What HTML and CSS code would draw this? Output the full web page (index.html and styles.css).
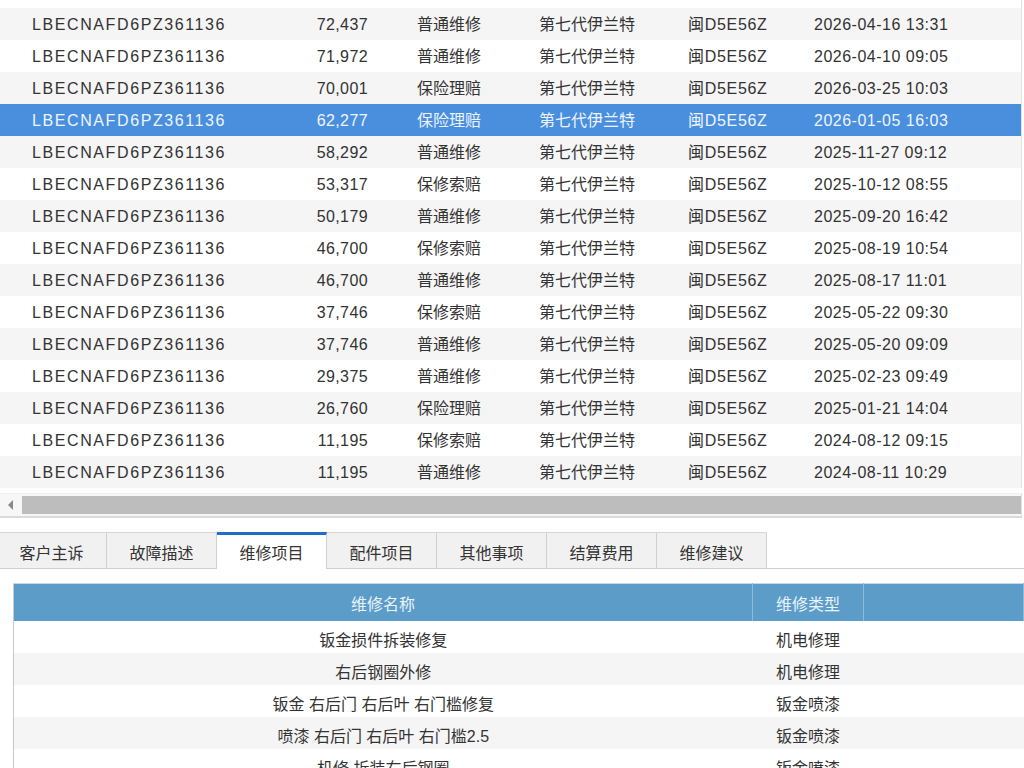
FILE: index.html
```html
<!DOCTYPE html>
<html lang="zh-CN">
<head>
    <meta charset="UTF-8">
    <meta name="viewport" content="width=device-width, initial-scale=1.0">
    <title>维修记录</title>
    <link rel="stylesheet" href="styles.css">
</head>
<body>

    <div id="history-grid">
        <div class="rows">
            <div class="row"><span class="vin">LBECNAFD6PZ361136</span><span class="km">73,915</span><span class="kind">保修索赔</span><span class="model">第七代伊兰特</span><span class="plate">闽D5E56Z</span><span class="date">2026-04-22 10:18</span></div>
            <div class="row alt"><span class="vin">LBECNAFD6PZ361136</span><span class="km">72,437</span><span class="kind">普通维修</span><span class="model">第七代伊兰特</span><span class="plate">闽D5E56Z</span><span class="date">2026-04-16 13:31</span></div>
            <div class="row"><span class="vin">LBECNAFD6PZ361136</span><span class="km">71,972</span><span class="kind">普通维修</span><span class="model">第七代伊兰特</span><span class="plate">闽D5E56Z</span><span class="date">2026-04-10 09:05</span></div>
            <div class="row alt"><span class="vin">LBECNAFD6PZ361136</span><span class="km">70,001</span><span class="kind">保险理赔</span><span class="model">第七代伊兰特</span><span class="plate">闽D5E56Z</span><span class="date">2026-03-25 10:03</span></div>
            <div class="row selected"><span class="vin">LBECNAFD6PZ361136</span><span class="km">62,277</span><span class="kind">保险理赔</span><span class="model">第七代伊兰特</span><span class="plate">闽D5E56Z</span><span class="date">2026-01-05 16:03</span></div>
            <div class="row alt"><span class="vin">LBECNAFD6PZ361136</span><span class="km">58,292</span><span class="kind">普通维修</span><span class="model">第七代伊兰特</span><span class="plate">闽D5E56Z</span><span class="date">2025-11-27 09:12</span></div>
            <div class="row"><span class="vin">LBECNAFD6PZ361136</span><span class="km">53,317</span><span class="kind">保修索赔</span><span class="model">第七代伊兰特</span><span class="plate">闽D5E56Z</span><span class="date">2025-10-12 08:55</span></div>
            <div class="row alt"><span class="vin">LBECNAFD6PZ361136</span><span class="km">50,179</span><span class="kind">普通维修</span><span class="model">第七代伊兰特</span><span class="plate">闽D5E56Z</span><span class="date">2025-09-20 16:42</span></div>
            <div class="row"><span class="vin">LBECNAFD6PZ361136</span><span class="km">46,700</span><span class="kind">保修索赔</span><span class="model">第七代伊兰特</span><span class="plate">闽D5E56Z</span><span class="date">2025-08-19 10:54</span></div>
            <div class="row alt"><span class="vin">LBECNAFD6PZ361136</span><span class="km">46,700</span><span class="kind">普通维修</span><span class="model">第七代伊兰特</span><span class="plate">闽D5E56Z</span><span class="date">2025-08-17 11:01</span></div>
            <div class="row"><span class="vin">LBECNAFD6PZ361136</span><span class="km">37,746</span><span class="kind">保修索赔</span><span class="model">第七代伊兰特</span><span class="plate">闽D5E56Z</span><span class="date">2025-05-22 09:30</span></div>
            <div class="row alt"><span class="vin">LBECNAFD6PZ361136</span><span class="km">37,746</span><span class="kind">普通维修</span><span class="model">第七代伊兰特</span><span class="plate">闽D5E56Z</span><span class="date">2025-05-20 09:09</span></div>
            <div class="row"><span class="vin">LBECNAFD6PZ361136</span><span class="km">29,375</span><span class="kind">普通维修</span><span class="model">第七代伊兰特</span><span class="plate">闽D5E56Z</span><span class="date">2025-02-23 09:49</span></div>
            <div class="row alt"><span class="vin">LBECNAFD6PZ361136</span><span class="km">26,760</span><span class="kind">保险理赔</span><span class="model">第七代伊兰特</span><span class="plate">闽D5E56Z</span><span class="date">2025-01-21 14:04</span></div>
            <div class="row"><span class="vin">LBECNAFD6PZ361136</span><span class="km">11,195</span><span class="kind">保修索赔</span><span class="model">第七代伊兰特</span><span class="plate">闽D5E56Z</span><span class="date">2024-08-12 09:15</span></div>
            <div class="row alt"><span class="vin">LBECNAFD6PZ361136</span><span class="km">11,195</span><span class="kind">普通维修</span><span class="model">第七代伊兰特</span><span class="plate">闽D5E56Z</span><span class="date">2024-08-11 10:29</span></div>
        </div>

        <div class="hscroll">
            <button class="arrow"><svg width="6" height="10" viewBox="0 0 6 10"><path d="M5 0 L0 5 L5 10 Z" fill="#8a8a8a"/></svg></button>
            <div class="thumb"></div>
        </div>
    </div>

    <div id="tabs">
        <div class="tab">客户主诉</div>
        <div class="tab">故障描述</div>
        <div class="tab active">维修项目</div>
        <div class="tab">配件项目</div>
        <div class="tab">其他事项</div>
        <div class="tab">结算费用</div>
        <div class="tab">维修建议</div>
    </div>

    <div id="panel">
        <table class="items">
            <thead>
                <tr><th class="name">维修名称</th><th class="type">维修类型</th><th></th></tr>
            </thead>
            <tbody>
                <tr><td>钣金损件拆装修复</td><td>机电修理</td><td></td></tr>
                <tr><td>右后钢圈外修</td><td>机电修理</td><td></td></tr>
                <tr><td>钣金 右后门 右后叶 右门槛修复</td><td>钣金喷漆</td><td></td></tr>
                <tr><td>喷漆 右后门 右后叶 右门槛2.5</td><td>钣金喷漆</td><td></td></tr>
                <tr><td>机修 拆装右后钢圈</td><td>钣金喷漆</td><td></td></tr>
            </tbody>
        </table>
    </div>

</body>
</html>
```

FILE: styles.css
```css
html, body{
    margin: 0;
    height: 100%;
    overflow: hidden;
}
body{
    background-color: white;
    font-family: "Liberation Sans", "Noto Sans CJK SC", sans-serif;
    font-size: 16px;
    color: #333;
}

/* upper grid, scrolled a bit so the first row is cut */
#history-grid{
    height: 532px;
    overflow: hidden;
}
.rows{
    margin-top: -24px;
    width: 1021px;
    border-right: 1px solid #e2e2e2;
}
.row{
    display: grid;
    grid-template-columns: 290px 115px 122px 149px 126px 1fr;
    height: 32px;
    line-height: 34px;
    white-space: nowrap;
    background-color: white;
}
.row.alt{
    background-color: #f5f5f5;
}
.row.selected{
    background-color: #4a8fdd;
    color: #eef4ff;
}
.vin{
    padding-left: 32px;
    letter-spacing: 1.6px;
}
.km{
    text-align: right;
    padding-right: 37px;
    letter-spacing: 0.4px;
}
.kind, .model, .plate, .date{
    padding-left: 12px;
}
.plate{
    letter-spacing: 0.7px;
}
.date{
    letter-spacing: 0.5px;
}

.hscroll{
    display: flex;
    align-items: center;
    margin-top: 5px;
    height: 22px;
    width: 1021px;
    background-color: #f7f7f7;
    border-top: 1px solid #efefef;
    border-right: 1px solid #e2e2e2;
    border-bottom: 2px solid #dadada;
}
.arrow{
    width: 22px;
    height: 20px;
    padding: 0;
    border: none;
    background: transparent;
    display: flex;
    align-items: center;
    justify-content: center;
}
.thumb{
    flex: 1;
    height: 18px;
    background-color: #bdbdbd;
}

/* tabs */
#tabs{
    display: flex;
    margin-left: -3px;
    height: 36px;
    border-bottom: 1px solid #cfcfcf;
}
.tab{
    width: 109px;
    height: 35px;
    line-height: 42px;
    text-align: center;
    background-color: #f1f1f1;
    border-top: 1px solid #d6d6d6;
    border-right: 1px solid #d0d0d0;
    color: #333;
}
.tab.active{
    background-color: white;
    border-top: 3px solid #1f6fc5;
    height: 34px;
    line-height: 38px;
    margin-bottom: -1px;
}

/* lower table */
#panel{
    padding: 14px 0 0 13px;
}
.items{
    width: 100%;
    border-collapse: collapse;
    border-left: 1px solid #c8c8c8;
    border-top: 1px solid #c8d8e4;
}
.items th{
    height: 37px;
    padding: 0;
    background-color: #5b9cc8;
    color: #eaf3fa;
    font-weight: normal;
    text-align: center;
    border-right: 1px solid #8fbbd9;
}
.items th.name{
    width: 738px;
}
.items th.type{
    width: 110px;
}
.items td{
    height: 28px;
    padding: 4px 0 0;
    text-align: center;
    white-space: nowrap;
}
.items tbody tr:nth-child(even){
    background-color: #f5f5f5;
}
```
